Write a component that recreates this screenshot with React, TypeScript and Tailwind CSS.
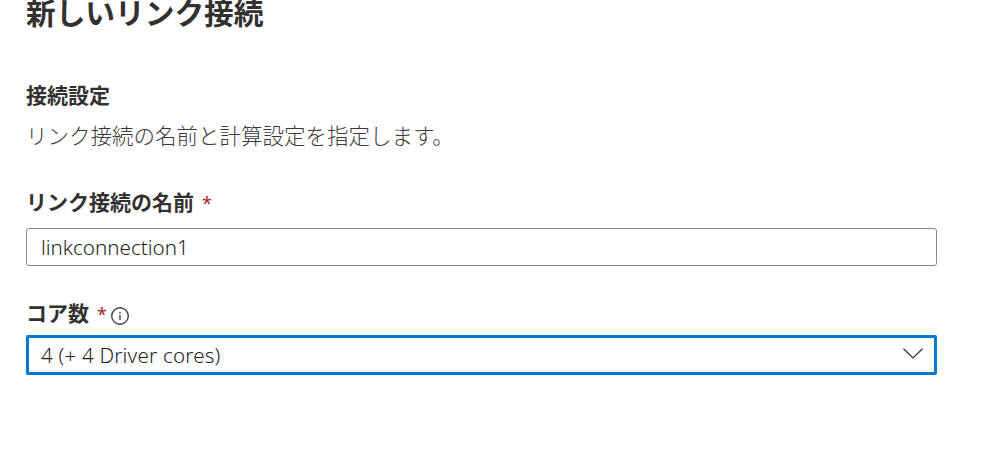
import React from 'react';

const jpFont = "font-['Noto_Sans','Noto_Sans_CJK_JP',sans-serif]";

function Required() {
  return <span className="ml-[8px] text-[18px] font-normal text-[#a4262c]">*</span>;
}

function InfoIcon() {
  return (
    <svg width="20" height="20" viewBox="0 0 20 20" fill="none" className="mt-[3px] ml-[3px]">
      <circle cx="10" cy="10" r="8.3" stroke="#444" strokeWidth="1.4" />
      <rect x="9.3" y="9" width="1.4" height="5" fill="#444" />
      <rect x="9.3" y="6" width="1.4" height="1.5" fill="#444" />
    </svg>
  );
}

export default function App() {
  return (
    <div className={`h-[461px] w-[981px] overflow-hidden bg-white pl-[26px] text-[#323130] ${jpFont}`}>
      <h1 className="-mt-[9px] h-[43px] text-[29.7px] leading-[43px] font-bold">新しいリンク接続</h1>

      <h2 className="mt-[46px] h-[30px] text-[21px] leading-[30px] font-bold">接続設定</h2>
      <p className="mt-[11px] h-[30px] text-[21.5px] leading-[30px] font-light text-[#3b3a39]">
        リンク接続の名前と計算設定を指定します。
      </p>

      <div className="mt-[37px] flex h-[30px] items-center text-[21px] font-bold">
        <span>リンク接続の名前</span>
        <Required />
      </div>
      <div className="mt-[10px] flex h-[38px] w-[911px] items-center rounded-[3px] border border-[#8a8886] px-[14px] text-[20.6px] font-light text-[#201f1e]">
        linkconnection1
      </div>

      <div className="mt-[33px] flex h-[30px] items-center text-[21px] font-bold">
        <span>コア数</span>
        <Required />
        <InfoIcon />
      </div>
      <div className="mt-[6px] flex h-[40px] w-[911px] items-center justify-between rounded-[2px] border-[3px] border-[#0078d4] pr-[11px] pl-[12px] text-[20.6px] font-light tracking-[0.2px] text-[#201f1e]">
        <span>4 (+ 4 Driver cores)</span>
        <svg width="20" height="11" viewBox="0 0 20 11" fill="none" className="mb-[3px]">
          <path d="M0.5 0.8L10 10L19.5 0.8" stroke="#323130" strokeWidth="1.2" />
        </svg>
      </div>
    </div>
  );
}
